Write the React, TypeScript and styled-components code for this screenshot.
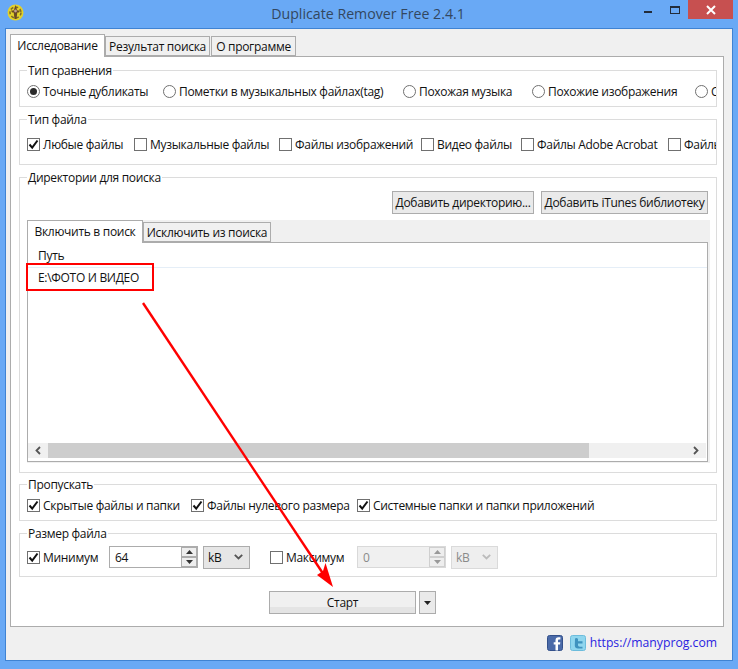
import React from "react";
import styled, { createGlobalStyle } from "styled-components";

const Global = createGlobalStyle`
  html, body { margin: 0; padding: 0; background: #69a9f5; overflow: hidden; }
  * { box-sizing: border-box; }
`;

const Win = styled.div`
  position: relative;
  width: 738px;
  height: 669px;
  display: flex;
  flex-direction: column;
  background: #69a9f5;
  font-family: "Open Sans", "Noto Sans", sans-serif;
  font-size: 12px;
  letter-spacing: -0.3px;
  color: #111;
`;
const TitleBar = styled.div`
  position: relative;
  height: 28px;
  display: flex;
  align-items: flex-start;
  padding-left: 7px;
`;
const AppIcon = styled.svg`
  margin-top: 4px;
  width: 17px;
  height: 17px;
`;
const Title = styled.div`
  flex: 1;
  text-align: center;
  font-size: 14.2px;
  letter-spacing: 0;
  line-height: 28px;
  color: #33475f;
  padding-left: 68px;
`;
const Controls = styled.div`
  display: flex;
  align-items: flex-start;
`;
const MinBtn = styled.div`
  width: 8px;
  height: 2px;
  margin-top: 11px;
  margin-right: 18px;
  background: #222c3a;
`;
const MaxBtn = styled.div`
  width: 10px;
  height: 8px;
  margin-top: 6px;
  margin-right: 8px;
  border: 1px solid #222c3a;
  border-top-width: 2px;
`;
const CloseBtn = styled.div`
  width: 45px;
  height: 19px;
  margin-right: 5px;
  background: #c75050;
  display: flex;
  align-items: center;
  justify-content: center;
`;
const Client = styled.div`
  flex: none;
  height: 633px;
  margin: 0 5px;
  background: #f0f0f0;
  border: 1px solid #3f83d3;
  padding: 5px 8px 0 4px;
  display: flex;
  flex-direction: column;
`;
const TabBar = styled.div`
  display: flex;
  align-items: flex-end;
  height: 22px;
`;
const Tab = styled.div<{ $active?: boolean; $w: number }>`
  width: ${(p) => p.$w}px;
  height: ${(p) => (p.$active ? 23 : 20)}px;
  margin-right: ${(p) => (p.$active ? 0 : 1)}px;
  margin-bottom: ${(p) => (p.$active ? -1 : 0)}px;
  position: relative;
  z-index: ${(p) => (p.$active ? 2 : 1)};
  background: ${(p) => (p.$active ? "#fff" : "#f0f0f0")};
  border: 1px solid #acacac;
  border-bottom: ${(p) => (p.$active ? "none" : "1px solid #acacac")};
  text-align: center;
  line-height: ${(p) => (p.$active ? 21 : 20)}px;
  white-space: nowrap;
`;
const Pane = styled.div`
  height: 571px;
  background: #fff;
  border: 1px solid #acacac;
  padding: 6px 6px 0 8px;
  display: flex;
  flex-direction: column;
`;
const Group = styled.fieldset<{ $h: number; $top: number; $pt: number }>`
  margin: ${(p) => p.$top}px 0 0;
  height: ${(p) => p.$h}px;
  min-width: 0;
  border: 1px solid #dcdcdc;
  padding: ${(p) => p.$pt}px 0 0 7px;
`;
const Legend = styled.legend`
  padding: 0 1px;
  font-size: 12px;
  line-height: 16px;
  height: 14px;
`;
const Row = styled.div`
  display: flex;
  align-items: center;
  height: 16px;
  overflow: hidden;
  white-space: nowrap;
`;
const TallRow = styled(Row)`
  height: 24px;
`;
const Item = styled.label<{ $w: number; $ml?: number }>`
  flex: none;
  width: ${(p) => p.$w}px;
  margin-left: ${(p) => p.$ml ?? 0}px;
  display: flex;
  align-items: center;
  gap: 3px;
`;
const Radio = styled.span<{ $on?: boolean }>`
  flex: none;
  width: 13px;
  height: 13px;
  border-radius: 50%;
  border: 1px solid #707070;
  background: #fff;
  display: flex;
  align-items: center;
  justify-content: center;
  &::after {
    content: "";
    width: 7px;
    height: 7px;
    border-radius: 50%;
    background: ${(p) => (p.$on ? "#2b2b2b" : "transparent")};
  }
`;
const Box = styled.span`
  flex: none;
  width: 13px;
  height: 13px;
  border: 1px solid #707070;
  background: #fff;
  display: flex;
  align-items: center;
  justify-content: center;
`;
const Check = ({ on }: { on?: boolean }) => (
  <Box>
    {on && (
      <svg width="11" height="11" viewBox="0 0 11 11">
        <path d="M1.5 5.5 L4.2 8.6 L9.5 1.5" fill="none" stroke="#111" strokeWidth="2" />
      </svg>
    )}
  </Box>
);
const ButtonsRow = styled.div`
  display: flex;
  justify-content: flex-end;
  gap: 7px;
  padding-right: 8px;
`;
const Btn = styled.div<{ $w: number }>`
  width: ${(p) => p.$w}px;
  height: 23px;
  background: #eaeaea;
  border: 1px solid #acacac;
  text-align: center;
  line-height: 21px;
  white-space: nowrap;
`;
const InnerWrap = styled.div`
  width: 683px;
  margin-top: 6px;
  padding-bottom: 1px;
  background: #f0f0f0;
  display: flex;
  flex-direction: column;
`;
const InnerPane = styled.div`
  width: 681px;
  height: 220px;
  background: #fff;
  border: 1px solid #acacac;
  display: flex;
  flex-direction: column;
`;
const HeadCell = styled.div`
  height: 25px;
  padding: 5px 0 0 10px;
  line-height: 15px;
  border-bottom: 1px solid #e5eef7;
`;
const Cell = styled.div`
  height: 18px;
  margin-top: 1px;
  padding-left: 10px;
  line-height: 18px;
`;
const ListSpace = styled.div`
  flex: 1;
`;
const HScroll = styled.div`
  height: 15px;
  margin: 0 1px 3px 0;
  background: #f0f0f0;
  display: flex;
  align-items: stretch;
`;
const ScrollArrow = styled.div`
  width: 20px;
  display: flex;
  align-items: center;
  justify-content: center;
`;
const ScrollThumb = styled.div`
  width: 541px;
  background: #cdcdcd;
`;
const ScrollTrack = styled.div`
  flex: 1;
`;
const Spin = styled.div<{ $w: number; $off?: boolean }>`
  flex: none;
  width: ${(p) => p.$w}px;
  height: 22px;
  border: 1px solid ${(p) => (p.$off ? "#d9d9d9" : "#acacac")};
  background: ${(p) => (p.$off ? "#f0f0f0" : "#fff")};
  color: ${(p) => (p.$off ? "#8a8a8a" : "#111")};
  display: flex;
  align-items: center;
  padding-left: 5px;
`;
const SpinText = styled.span`
  flex: 1;
`;
const SpinBtns = styled.div<{ $off?: boolean }>`
  width: 16px;
  height: 20px;
  background: #fff;
  display: flex;
  flex-direction: column;
  & > div {
    flex: 1;
    background: #eee;
    border: 1px solid ${(p) => (p.$off ? "#cfcfcf" : "#acacac")};
    display: flex;
    align-items: center;
    justify-content: center;
  }
`;
const Select = styled.div<{ $off?: boolean }>`
  flex: none;
  width: 47px;
  height: 23px;
  margin-left: 5px;
  background: ${(p) => (p.$off ? "#eeeeee" : "#e6e6e6")};
  border: 1px solid ${(p) => (p.$off ? "#dadada" : "#acacac")};
  color: ${(p) => (p.$off ? "#8a8a8a" : "#111")};
  display: flex;
  align-items: center;
  justify-content: space-between;
  padding: 0 6px 0 4px;
`;
const StartRow = styled.div`
  display: flex;
  gap: 3px;
  margin: 14px 0 0 250px;
`;
const StartBtn = styled(Btn)`
  background: linear-gradient(#f0f0f0 0 70%, #e4e4e4 70%);
`;
const DropBtn = styled(Btn)`
  display: flex;
  align-items: center;
  justify-content: center;
`;
const Footer = styled.div`
  flex: 1;
  display: flex;
  align-items: center;
  justify-content: flex-end;
  padding: 0 7px 2px 0;
`;
const Social = styled.svg`
  width: 16px;
  height: 16px;
  margin-right: 7px;
`;
const Link = styled.a`
  color: #2a1ee0;
  font-size: 12.2px;
  letter-spacing: 0;
  margin-left: -3px;
  text-decoration: none;
`;
const Overlay = styled.svg`
  position: absolute;
  inset: 0;
  width: 738px;
  height: 669px;
  pointer-events: none;
`;

const Caret = ({ up, c = "#333" }: { up?: boolean; c?: string }) => (
  <svg width="7" height="4" viewBox="0 0 7 4">
    <path d={up ? "M0 4 L3.5 0 L7 4Z" : "M0 0 L3.5 4 L7 0Z"} fill={c} />
  </svg>
);
const Chevron = ({ c = "#555" }: { c?: string }) => (
  <svg width="9" height="6" viewBox="0 0 9 6">
    <path d="M0.8 0.8 L4.5 4.5 L8.2 0.8" fill="none" stroke={c} strokeWidth="1.8" />
  </svg>
);

export default function App() {
  return (
    <Win>
      <Global />
      <TitleBar>
        <AppIcon viewBox="0 0 17 17">
          <circle cx="8.5" cy="8.500" r="8" fill="#e3d22a" />
          <circle cx="8.5" cy="8.500" r="5.500" fill="none" stroke="#7d6a2a" strokeWidth="1.500" strokeDasharray="3 2" />
          <path d="M8.500 1 L10.500 7 L9.500 15 L7.500 15 L6.500 7Z" fill="#6a4a25" />
          <path d="M4 6.500 L13 6.500 L12 8.500 L5 8.500Z" fill="#6a4a25" />
          <circle cx="8.500" cy="7" r="1.400" fill="#c4a090" />
        </AppIcon>
        <Title>Duplicate Remover Free 2.4.1</Title>
        <Controls>
          <MinBtn />
          <MaxBtn />
          <CloseBtn>
            <svg width="10" height="10" viewBox="0 0 10 10">
              <path d="M1 1 L9 9 M9 1 L1 9" stroke="#fff" strokeWidth="2" />
            </svg>
          </CloseBtn>
        </Controls>
      </TitleBar>
      <Client>
        <TabBar>
          <Tab $active $w={95}>Исследование</Tab>
          <Tab $w={105}>Результат поиска</Tab>
          <Tab $w={85}>О программе</Tab>
        </TabBar>
        <Pane>
          <Group $h={44} $top={0} $pt={6}>
            <Legend>Тип сравнения</Legend>
            <Row>
              <Item $w={136}><Radio $on />Точные дубликаты</Item>
              <Item $w={240}><Radio />Пометки в музыкальных файлах(tag)</Item>
              <Item $w={129}><Radio />Похожая музыка</Item>
              <Item $w={163}><Radio />Похожие изображения</Item>
              <Item $w={60}><Radio />Схожие</Item>
            </Row>
          </Group>
          <Group $h={53} $top={5} $pt={10}>
            <Legend>Тип файла</Legend>
            <Row>
              <Item $w={107}><Check on />Любые файлы</Item>
              <Item $w={145}><Check />Музыкальные файлы</Item>
              <Item $w={142}><Check />Файлы изображений</Item>
              <Item $w={100}><Check />Видео файлы</Item>
              <Item $w={147}><Check />Файлы Adobe Acrobat</Item>
              <Item $w={100}><Check />Файлы</Item>
            </Row>
          </Group>
          <Group $h={303} $top={5} $pt={7}>
            <Legend>Директории для поиска</Legend>
            <ButtonsRow>
              <Btn $w={142}>Добавить директорию...</Btn>
              <Btn $w={167}>Добавить iTunes библиотеку</Btn>
            </ButtonsRow>
            <InnerWrap>
              <TabBar>
                <Tab $active $w={116}>Включить в поиск</Tab>
                <Tab $w={128}>Исключить из поиска</Tab>
              </TabBar>
              <InnerPane>
                <HeadCell>Путь</HeadCell>
                <Cell>E:\ФОТО И ВИДЕО</Cell>
                <ListSpace />
                <HScroll>
                  <ScrollArrow>
                    <svg width="6" height="9" viewBox="0 0 6 9">
                      <path d="M5 1 L1.500 4.500 L5 8" fill="none" stroke="#555" strokeWidth="1.800" />
                    </svg>
                  </ScrollArrow>
                  <ScrollThumb />
                  <ScrollTrack />
                  <ScrollArrow>
                    <svg width="6" height="9" viewBox="0 0 6 9">
                      <path d="M1 1 L4.500 4.500 L1 8" fill="none" stroke="#555" strokeWidth="1.800" />
                    </svg>
                  </ScrollArrow>
                </HScroll>
              </InnerPane>
            </InnerWrap>
          </Group>
          <Group $h={44} $top={4} $pt={6}>
            <Legend>Пропускать</Legend>
            <Row>
              <Item $w={164}><Check on />Скрытые файлы и папки</Item>
              <Item $w={166}><Check on />Файлы нулевого размера</Item>
              <Item $w={250}><Check on />Системные папки и папки приложений</Item>
            </Row>
          </Group>
          <Group $h={51} $top={5} $pt={5}>
            <Legend>Размер файла</Legend>
            <TallRow>
              <Item $w={82}><Check on />Минимум</Item>
              <Spin $w={89}>
                <SpinText>64</SpinText>
                <SpinBtns>
                  <div><Caret up /></div>
                  <div><Caret /></div>
                </SpinBtns>
              </Spin>
              <Select>kB<Chevron /></Select>
              <Item $w={87} $ml={20}><Check />Максимум</Item>
              <Spin $w={89} $off>
                <SpinText>0</SpinText>
                <SpinBtns $off>
                  <div><Caret up c="#999" /></div>
                  <div><Caret c="#999" /></div>
                </SpinBtns>
              </Spin>
              <Select $off>kB<Chevron c="#bbb" /></Select>
            </TallRow>
          </Group>
          <StartRow>
            <StartBtn $w={147}>Старт</StartBtn>
            <DropBtn $w={17}><Caret c="#222" /></DropBtn>
          </StartRow>
        </Pane>
        <Footer>
          <Social viewBox="0 0 16 16">
            <rect x="0.500" y="0.500" width="15" height="15" rx="2" fill="#4a6aa8" stroke="#33508a" />
            <path d="M11 15.500 V9.500 H13 L13.300 7.200 H11 V5.700 C11 4.900 11.300 4.500 12.200 4.500 H13.400 V2.300 H11.500 C9.500 2.300 8.500 3.500 8.500 5.400 V7.200 H6.700 V9.500 H8.500 V15.500Z" fill="#fff" />
          </Social>
          <Social viewBox="0 0 16 16">
            <rect x="0.500" y="0.500" width="15" height="15" rx="2" fill="#8fd6ee" stroke="#6cbcdc" />
            <path d="M5 3.500 Q7 2.500 8 4 V6.200 H12.500 V8.500 H8 V10 C8 11.200 8.700 11.700 9.800 11.700 H12.500 V13.500 H8 C6 13.500 4.800 12.300 4.800 10.500Z" fill="#3f93bf" />
          </Social>
          <Link href="#">https://manyprog.com</Link>
        </Footer>
      </Client>
      <Overlay viewBox="0 0 738 669">
        <rect x="27" y="264" width="126" height="26" fill="none" stroke="#f00" strokeWidth="2" />
        <path d="M143 303 L326 578" stroke="#f00" strokeWidth="2.400" fill="none" />
        <path d="M333 587 L317 575 L323 571 L325.500 563Z" fill="#f00" />
      </Overlay>
    </Win>
  );
}
